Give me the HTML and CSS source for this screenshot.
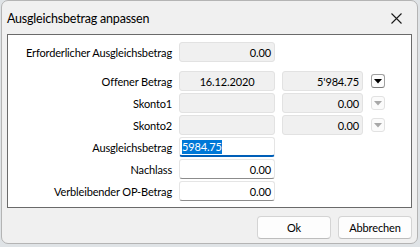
FILE: index.html
```html
<!DOCTYPE html>
<html lang="de">
<head>
    <meta charset="UTF-8">
    <title>Ausgleichsbetrag anpassen</title>
    <link rel="stylesheet" href="styles.css">
</head>
<body>
    <div class="window">
        <div class="titlebar">
            <span class="title">Ausgleichsbetrag anpassen</span>
            <span class="close">
                <svg width="11" height="11" viewBox="0 0 11 11">
                    <path d="M0.5 0.5 L10.5 10.5 M10.5 0.5 L0.5 10.5" stroke="#1a1a1a" stroke-width="1.1" fill="none"/>
                </svg>
            </span>
        </div>

        <div class="panel">
            <div class="grid">
                <label class="lbl lbl-left">Erforderlicher Ausgleichsbetrag</label>
                <div class="field ro num">0.00</div>
                <div></div>
                <div></div>

                <div class="spacer"></div>

                <label class="lbl">Offener Betrag</label>
                <div class="field ro center">16.12.2020</div>
                <div class="field ro num">5'984.75</div>
                <button class="drop">
                    <svg width="8" height="5" viewBox="0 0 8 5"><path d="M0 0 H8 L4 4.5 Z" fill="#000"/></svg>
                </button>

                <label class="lbl">Skonto1</label>
                <div class="field ro"></div>
                <div class="field ro num">0.00</div>
                <button class="drop disabled">
                    <svg width="8" height="5" viewBox="0 0 8 5"><path d="M0 0 H8 L4 4.5 Z" fill="#a8a8a8"/></svg>
                </button>

                <label class="lbl">Skonto2</label>
                <div class="field ro"></div>
                <div class="field ro num">0.00</div>
                <button class="drop disabled">
                    <svg width="8" height="5" viewBox="0 0 8 5"><path d="M0 0 H8 L4 4.5 Z" fill="#a8a8a8"/></svg>
                </button>

                <label class="lbl">Ausgleichsbetrag</label>
                <div class="field edit focus"><span class="sel">5984.75</span></div>
                <div></div>
                <div></div>

                <label class="lbl">Nachlass</label>
                <div class="field edit num">0.00</div>
                <div></div>
                <div></div>

                <label class="lbl">Verbleibender OP-Betrag</label>
                <div class="field edit num">0.00</div>
                <div></div>
                <div></div>
            </div>
        </div>

        <div class="buttons">
            <button class="btn">Ok</button>
            <button class="btn">Abbrechen</button>
        </div>
    </div>
</body>
</html>
```

FILE: styles.css
```css
body {
    margin: 0;
    background-color: #dfe3e6;
    font-family: Lato, "Segoe UI", sans-serif;
    font-size: 11px;
    letter-spacing: -0.15px;
    color: #000;
}
.window {
    margin: 0 2px 1px 1px;
    height: 244px;
    border: 1px solid #b4b4b4;
    border-radius: 7px;
    background-color: #f0f0f0;
    box-sizing: border-box;
    overflow: hidden;
}
.titlebar {
    height: 33px;
    display: flex;
    align-items: center;
    justify-content: space-between;
    padding: 0 15px 0 5px;
}
.title {
    font-size: 12.5px;
    letter-spacing: -0.2px;
    padding-top: 1px;
}
.close {
    display: flex;
    padding-top: 2px;
}
.panel {
    margin: 0 5px;
    height: 174px;
    box-sizing: border-box;
    border: 1px solid #6a6a6a;
    background-color: #fff;
    padding: 7px 0 0 18px;
}
.grid {
    display: grid;
    grid-template-columns: 146px 96px 81px 14px;
    grid-template-rows: 20px 5px;
    grid-auto-rows: 20px;
    column-gap: 7px;
    row-gap: 2px;
}
.grid > .drop {
    margin-left: 1px;
}
.spacer {
    grid-column: 1 / -1;
}
.lbl {
    display: flex;
    align-items: center;
    justify-content: flex-end;
    white-space: nowrap;
}
.lbl-left {
    justify-content: flex-start;
}
.field {
    box-sizing: border-box;
    height: 20px;
    display: flex;
    align-items: center;
    padding: 0 3px;
    border-radius: 3px;
    white-space: nowrap;
}
.ro {
    background-color: #f0f0f0;
    border: 1px solid #e2e2e2;
}
.edit {
    background-color: #fff;
    border: 1px solid #e5e5e5;
    border-bottom-color: #8c8c8c;
}
.focus {
    border-bottom: 2px solid #005fb8;
    padding-left: 2px;
}
.num {
    justify-content: flex-end;
}
.center {
    justify-content: center;
}
.sel {
    background-color: #0078d7;
    color: #fff;
    line-height: 14px;
}
.drop {
    align-self: center;
    width: 14px;
    height: 14px;
    padding: 0;
    display: flex;
    align-items: center;
    justify-content: center;
    background-color: #fdfdfd;
    border: 1px solid #a0a0a0;
    border-bottom-color: #7a7a7a;
    border-radius: 3px;
}
.drop.disabled {
    border-color: #e2e2e2;
    background-color: #fbfbfb;
}
.buttons {
    display: flex;
    justify-content: flex-end;
    gap: 7px;
    padding: 8px 5px 0 0;
}
.btn {
    width: 74px;
    height: 23px;
    font-family: Lato, "Segoe UI", sans-serif;
    font-size: 11px;
    letter-spacing: -0.15px;
    color: #000;
    background-color: #fdfdfd;
    border: 1px solid #d4d4d4;
    border-bottom-color: #bdbdbd;
    border-radius: 4px;
    padding: 0;
}
```
